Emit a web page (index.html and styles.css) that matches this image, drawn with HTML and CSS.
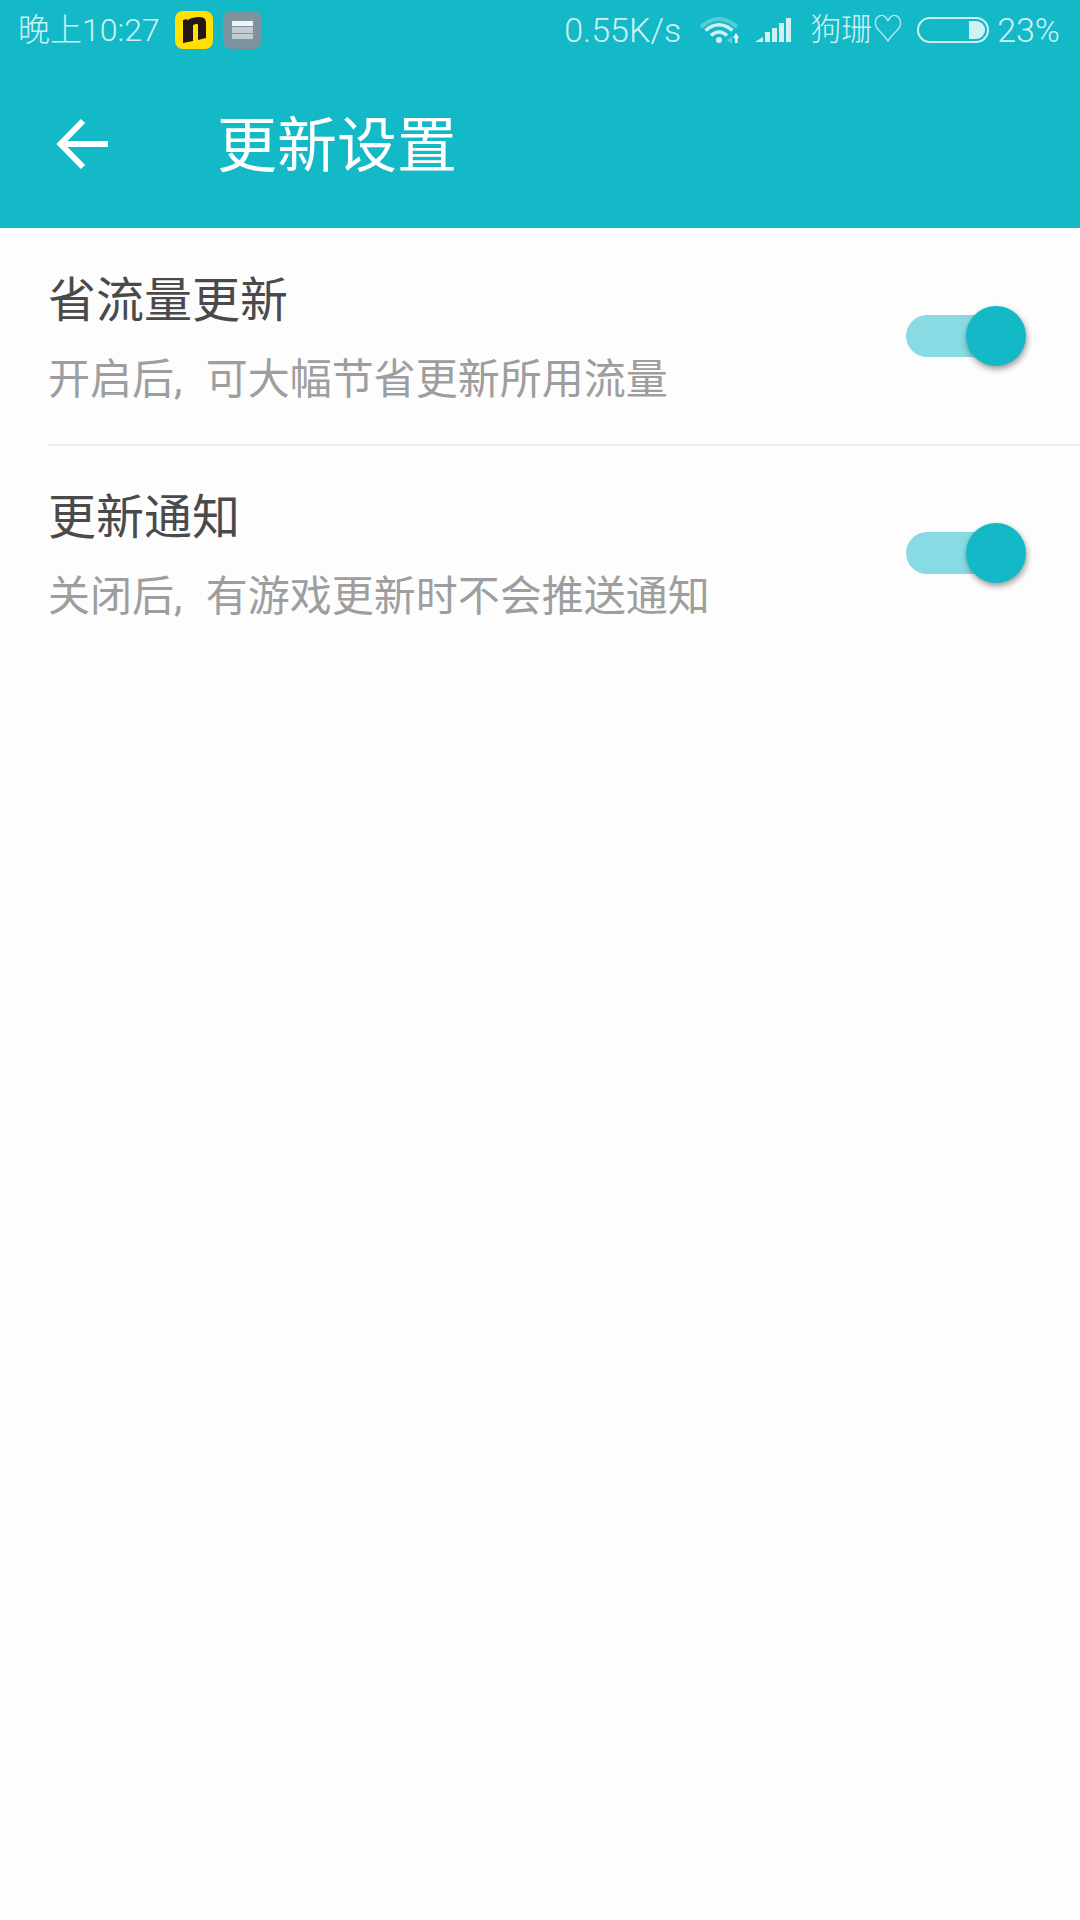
FILE: index.html
```html
<!DOCTYPE html>
<html lang="zh">
<head>
<meta charset="utf-8">
<title>更新设置</title>
<link rel="stylesheet" href="styles.css">
</head>
<body>
<header class="appbar">
  <div class="status">
    <div class="status-left">
      <span class="clock">晚上10:27</span>
      <svg class="app-icon first" viewBox="0 0 38 38"><rect width="38" height="38" rx="8" fill="#ffe000"/><path d="M8 9 L12 8 V9.5 Q16 6 25 6 Q31 6 31 12 V27 L23 29 V14 Q23 12.5 21 13 Q19 13.5 18 14 V30 L8 32 Z" fill="#231815"/></svg>
      <svg class="app-icon" viewBox="0 0 38 38"><rect width="38" height="38" rx="8" fill="#7f939f"/><rect x="9" y="10" width="21" height="5" fill="#f1f4f6"/><rect x="9" y="16" width="21" height="6" fill="#c2ccd3"/><rect x="9" y="23" width="21" height="5" fill="#c2ccd3"/></svg>
    </div>
    <div class="status-right">
      <span class="speed">0.55K/s</span>
      <svg class="wifi" viewBox="0 0 41 28"><path d="M2 11 Q20 -5 38 11" fill="none" stroke="#fff" stroke-width="4" opacity=".28"/><path d="M6.500 14.500 Q20 3 33.500 14.500 M12 19.500 Q20 12.500 28 19.500" fill="none" stroke="#d0f1f4" stroke-width="3.500"/><circle cx="20" cy="24" r="3" fill="#d0f1f4"/><path d="M33 21 V28 L28 24 Z" fill="#fff" opacity=".3"/><path d="M37 17 L40 22 H38.500 V27 H36 V22 H34 Z" fill="#fff"/></svg>
      <svg class="signal" viewBox="0 0 38 26"><path d="M1 25 L9 20 V25 Z" fill="#d0f1f4"/><rect x="11" y="15" width="5" height="10" fill="#d0f1f4"/><rect x="18" y="11" width="5" height="14" fill="#d0f1f4"/><rect x="25" y="6" width="5" height="19" fill="#d0f1f4"/><rect x="32" y="1" width="5" height="24" fill="#d0f1f4"/></svg>
      <span class="carrier">狗珊♡</span>
      <div class="battery"><span class="battery-fill"></span></div>
      <span class="percent">23%</span>
    </div>
  </div>
  <div class="toolbar">
    <button class="back" aria-label="返回">
      <svg class="back-icon" viewBox="0 0 70 70"><path d="M59 35 H14 M34 12 L11.500 35 L34 58" fill="none" stroke="#fff" stroke-width="6"/></svg>
    </button>
    <h1 class="title">更新设置</h1>
  </div>
</header>
<main class="list">
  <section class="row">
    <div class="row-text">
      <h2 class="row-title">省流量更新</h2>
      <p class="row-sub">开启后<span class="comma">, </span>可大幅节省更新所用流量</p>
    </div>
    <div class="toggle"><span class="track"></span><span class="thumb"></span></div>
  </section>
  <section class="row">
    <div class="row-text">
      <h2 class="row-title">更新通知</h2>
      <p class="row-sub">关闭后<span class="comma">, </span>有游戏更新时不会推送通知</p>
    </div>
    <div class="toggle"><span class="track"></span><span class="thumb"></span></div>
  </section>
</main>
</body>
</html>
```
FILE: styles.css
```css
* { box-sizing: border-box; }
html, body { margin: 0; padding: 0; }
body {
  width: 1080px;
  height: 1920px;
  background: #fdfdfd;
  font-family: "Roboto", "Noto Sans CJK SC", sans-serif;
  overflow: hidden;
}
.appbar { background: #14b9c8; height: 228px; }
.status {
  height: 60px;
  display: flex;
  justify-content: space-between;
  align-items: center;
  padding: 0 20px 0 18px;
  color: #d0f1f4;
  font-size: 34px;
  font-weight: 300;
  line-height: 60px;
}
.status-left, .status-right { display: flex; align-items: center; }
.clock { font-size: 32px; }
.app-icon { width: 38px; height: 38px; margin-left: 10px; }
.app-icon.first { margin-left: 15px; }
.wifi { width: 41px; height: 28px; margin-left: 18px; }
.signal { width: 38px; height: 26px; margin-left: 14px; }
.carrier { margin-left: 18px; font-size: 31px; }
.battery {
  width: 72px;
  height: 26px;
  margin-left: 14px;
  border: 2px solid #d0f1f4;
  border-radius: 13px;
  padding: 2px;
  display: flex;
  justify-content: flex-end;
}
.battery-fill {
  width: 16px;
  background: #d0f1f4;
  border-radius: 0 10px 10px 0;
}
.percent { margin-left: 8px; }
.toolbar { display: flex; align-items: center; height: 168px; padding-left: 48px; }
.back {
  width: 72px;
  height: 72px;
  padding: 0;
  border: 1px solid rgba(255, 255, 255, 0.015);
  background: none;
  display: block;
}
.back-icon { display: block; width: 70px; height: 70px; }
.title {
  margin: -7px 0 0 97px;
  font-size: 60px;
  font-weight: 400;
  color: #fff;
}
.row {
  height: 218px;
  margin-left: 48px;
  border-bottom: 2px solid #f0f0f0;
  display: flex;
  justify-content: space-between;
  align-items: center;
  padding-right: 54px;
}
.row:last-child { height: 214px; border-bottom: none; }
.row-text { margin-top: 6px; }
.row-title {
  margin: 0;
  font-size: 48px;
  line-height: 60px;
  font-weight: 400;
  color: #4a4a4a;
}
.row-sub {
  margin: 22px 0 0;
  font-size: 42px;
  line-height: 54px;
  color: #9e9e9e;
}
.comma { word-spacing: 13px; }
.toggle { position: relative; width: 120px; height: 60px; }
.track {
  position: absolute;
  left: 0;
  right: 16px;
  top: 9px;
  height: 42px;
  border-radius: 21px;
  background: #89dbe3;
}
.thumb {
  position: absolute;
  right: 0;
  top: 0;
  width: 60px;
  height: 60px;
  border-radius: 50%;
  background: #14b9c8;
  box-shadow: 1px 3px 6px rgba(0, 0, 0, 0.4);
}
```
